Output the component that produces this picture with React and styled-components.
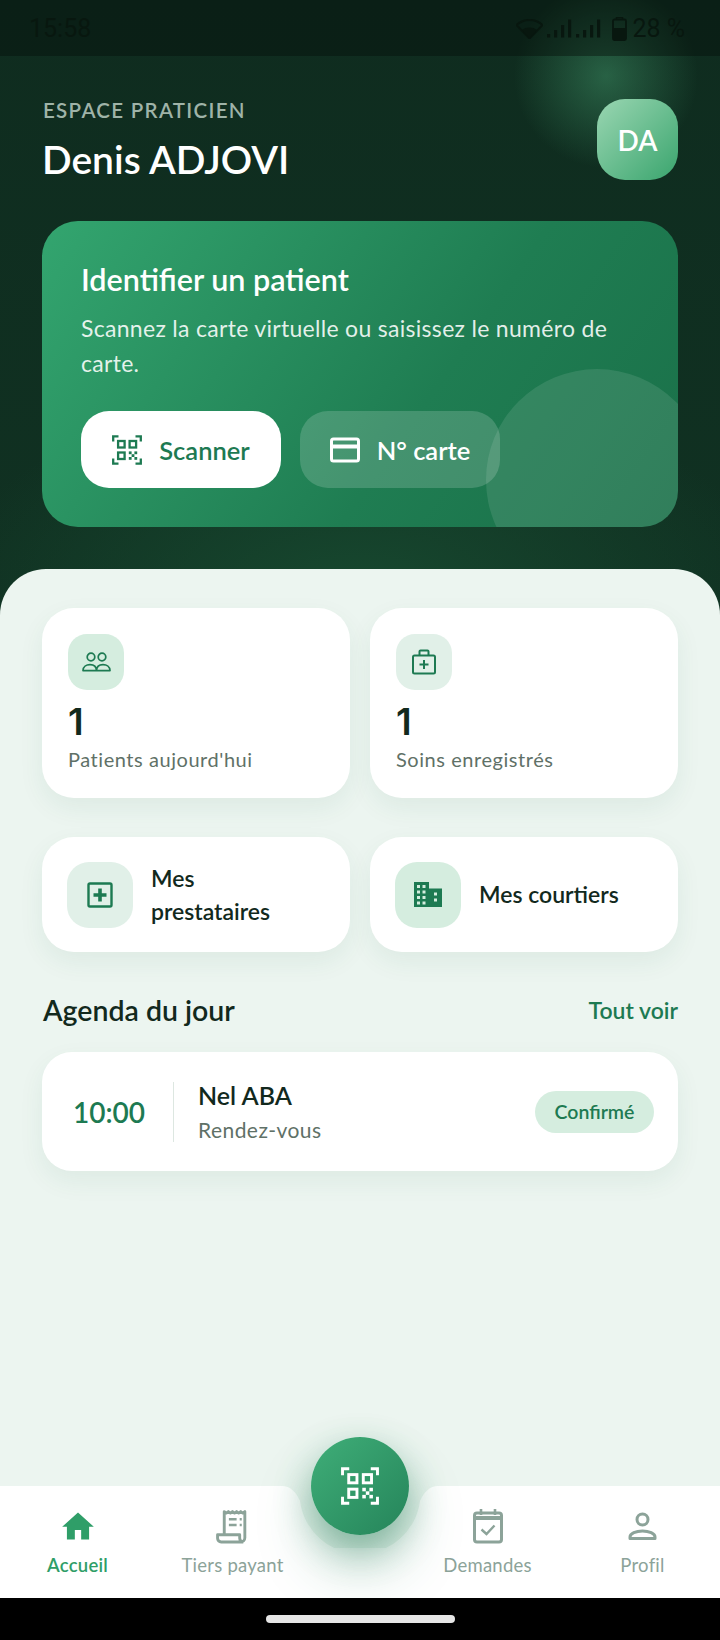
import React from "react";
import styled, { createGlobalStyle } from "styled-components";

const Global = createGlobalStyle`
  html, body { margin: 0; padding: 0; background: #000; }
  * { box-sizing: border-box; }
  body { font-family: "Lato", "Open Sans", sans-serif; }
`;

const Screen = styled.div`
  position: relative;
  width: 720px;
  height: 1640px;
  overflow: hidden;
  display: flex;
  flex-direction: column;
  background:
    radial-gradient(circle 92px at 606px 76px, rgba(74,170,120,.42), rgba(74,170,120,0) 100%),
    radial-gradient(ellipse 420px 200px at 360px 590px, #17482f 0%, rgba(23,72,47,0) 100%),
    linear-gradient(180deg, #0f2c1f 0%, #113524 60%, #113623 100%);
`;

const StatusBar = styled.div`
  height: 56px;
  flex: none;
  display: flex;
  align-items: center;
  justify-content: space-between;
  padding: 1px 35px 0 29px;
  background: rgba(5, 14, 9, .42);
  color: #08170f;
  font: 400 25px "Roboto", sans-serif;
`;

const StatusGroup = styled.div`
  display: flex;
  align-items: center;
`;

const StatusGap = styled.span`
  width: ${p => p.$w}px;
`;

const Header = styled.header`
  flex: none;
  padding: 43px 42px 42px 42px;
  display: flex;
  flex-direction: column;
  gap: 39px;
`;

const HeaderRow = styled.div`
  display: flex;
  justify-content: space-between;
  align-items: flex-start;
`;

const Identity = styled.div`
  display: flex;
  flex-direction: column;
`;

const Eyebrow = styled.div`
  font-size: 20.5px;
  font-weight: 600;
  line-height: 24px;
  letter-spacing: 1.3px;
  color: #9fb3a8;
  margin: -1px 0 0 1px;
`;

const Name = styled.h1`
  margin: 13px 0 -1px 0;
  font-size: 39px;
  font-weight: 600;
  line-height: 48px;
  color: #fff;
`;

const Avatar = styled.div`
  width: 81px;
  height: 81px;
  border-radius: 28px;
  background: linear-gradient(135deg, #9ad6b2 0%, #3aa56e 100%);
  display: flex;
  align-items: center;
  justify-content: center;
  color: #fff;
  font-size: 28px;
  font-weight: 600;
`;

const Hero = styled.section`
  position: relative;
  overflow: hidden;
  height: 306px;
  border-radius: 36px;
  padding: 39px 39px 0;
  background: linear-gradient(125deg, #33a56f 0%, #1f7d52 60%, #1a7049 100%);
`;

const HeroCircle = styled.div`
  position: absolute;
  width: 222px;
  height: 222px;
  right: -30px;
  bottom: -64px;
  border-radius: 50%;
  background: rgba(255, 255, 255, .1);
`;

const HeroTitle = styled.h2`
  margin: 0;
  font-size: 30.5px;
  font-weight: 600;
  line-height: 38px;
  color: #fff;
`;

const HeroText = styled.p`
  margin: 13px 0 0;
  font-size: 23px;
  line-height: 35px;
  letter-spacing: .3px;
  color: rgba(255, 255, 255, .88);
`;

const HeroActions = styled.div`
  position: relative;
  display: flex;
  gap: 19px;
  margin-top: 30px;
`;

const HeroButton = styled.div`
  width: 200px;
  height: 77px;
  border-radius: 28px;
  display: flex;
  align-items: center;
  justify-content: center;
  gap: 17px;
  font-size: 25.5px;
  font-weight: 600;
  background: ${p => (p.$primary ? "#fff" : "rgba(255,255,255,.17)")};
  color: ${p => (p.$primary ? "#1d7a52" : "#fff")};
`;

const Sheet = styled.main`
  flex: 1;
  min-height: 0;
  border-radius: 46px 46px 0 0;
  background: #ecf5f0;
  padding: 39px 42px 0;
`;

const Grid = styled.div`
  display: grid;
  grid-template-columns: 1fr 1fr;
  column-gap: 20px;
  margin-bottom: 39px;
`;

const cardShadow = "0 10px 26px rgba(30, 100, 65, .07)";

const StatCard = styled.div`
  height: 190px;
  border-radius: 32px;
  background: #fff;
  box-shadow: ${cardShadow};
  padding: 26px 26px 0;
`;

const StatIcon = styled.div`
  width: 56px;
  height: 56px;
  border-radius: 19px;
  display: flex;
  align-items: center;
  justify-content: center;
  background: ${p => p.$bg};
`;

const StatValue = styled.div`
  margin-top: 9px;
  font-family: "Inter", sans-serif;
  font-size: 37px;
  font-weight: 600;
  line-height: 46px;
  color: #12291d;
`;

const StatLabel = styled.div`
  margin-top: 1px;
  font-size: 20px;
  line-height: 26px;
  letter-spacing: .55px;
  color: #5f7167;
`;

const LinkCard = styled.div`
  height: 115px;
  border-radius: 32px;
  background: #fff;
  box-shadow: ${cardShadow};
  display: flex;
  align-items: center;
  gap: 18px;
  padding: 0 25px;
`;

const LinkIcon = styled.div`
  width: 66px;
  height: 66px;
  flex: none;
  border-radius: 22px;
  display: flex;
  align-items: center;
  justify-content: center;
  background: ${p => p.$bg};
`;

const LinkLabel = styled.div`
  max-width: 150px;
  font-size: 23px;
  font-weight: 600;
  line-height: 33px;
  color: #12291d;
`;

const SectionHead = styled.div`
  display: flex;
  justify-content: space-between;
  align-items: center;
  height: 40px;
  margin-top: -1px;
  margin-bottom: 22px;
`;

const SectionTitle = styled.h3`
  margin: 0 0 0 1px;
  font-size: 28.5px;
  font-weight: 600;
  color: #12291d;
`;

const SectionLink = styled.span`
  font-size: 23px;
  font-weight: 600;
  color: #1d7a52;
`;

const AgendaCard = styled.div`
  height: 119px;
  border-radius: 30px;
  background: #fff;
  box-shadow: ${cardShadow};
  display: flex;
  align-items: center;
  padding: 0 24px 0 31px;
`;

const AgendaTime = styled.div`
  width: 70px;
  font-size: 28px;
  font-weight: 600;
  white-space: nowrap;
  color: #1d7a52;
`;

const AgendaDivider = styled.div`
  width: 1px;
  height: 60px;
  margin: 0 24px 0 30px;
  background: #dde7e1;
`;

const AgendaBody = styled.div`
  flex: 1;
  display: flex;
  flex-direction: column;
  gap: 7px;
`;

const AgendaName = styled.div`
  font-size: 25px;
  font-weight: 600;
  line-height: 30px;
  color: #12291d;
`;

const AgendaKind = styled.div`
  font-size: 21px;
  line-height: 26px;
  letter-spacing: .45px;
  color: #5f7167;
`;

const Badge = styled.div`
  width: 119px;
  height: 42px;
  border-radius: 21px;
  background: #d5eddf;
  color: #1d7a52;
  display: flex;
  align-items: center;
  justify-content: center;
  font-size: 19.5px;
  font-weight: 600;
`;

const Nav = styled.nav`
  position: relative;
  flex: none;
  height: 112px;
  background: #fff;
  display: grid;
  grid-template-columns: 155px 155px 100px 155px 155px;
`;

const NavItem = styled.div`
  display: flex;
  flex-direction: column;
  align-items: center;
  color: ${p => (p.$active ? "#2f9e68" : "#8ca399")};
  font-size: 18.5px;
  font-weight: ${p => (p.$active ? 600 : 400)};
  letter-spacing: .25px;
  white-space: nowrap;
`;

const NavIconSlot = styled.div`
  height: 38px;
  margin-top: 21px;
  display: flex;
  align-items: center;
  justify-content: center;
`;

const NavLabel = styled.div`
  margin-top: 8px;
  line-height: 24px;
`;

const Notch = styled.svg`
  position: absolute;
  left: 270px;
  top: 0;
  display: block;
`;

const Fab = styled.div`
  position: absolute;
  left: 311px;
  top: -49px;
  width: 98px;
  height: 98px;
  border-radius: 50%;
  background: linear-gradient(135deg, #3fae78 0%, #25845a 100%);
  box-shadow: 0 14px 36px rgba(35, 125, 85, .42), 0 34px 56px rgba(35, 125, 85, .26);
  display: flex;
  align-items: center;
  justify-content: center;
`;

const SystemBar = styled.div`
  position: relative;
  flex: none;
  height: 42px;
  background: #000;
  display: flex;
  justify-content: center;
  padding-top: 17px;
`;

const HomePill = styled.div`
  width: 189px;
  height: 8px;
  border-radius: 4px;
  background: #e6e6e6;
`;

const QrIcon = ({ size, color }) => (
  <svg width={size} height={size} viewBox="0 0 30 30" fill="none">
    <g stroke={color} strokeWidth="2.3">
      <path d="M1.200 6.500V1.400H6.500M23.500 1.400h5.300V6.500M1.200 23.500v5.100H6.500M23.500 28.600h5.300V23.500" />
      <rect x="6.100" y="6" width="6.500" height="6.500" />
      <rect x="17.600" y="6" width="6.500" height="6.500" />
      <rect x="6.100" y="17.500" width="6.500" height="6.500" />
    </g>
    <g fill={color}>
      <rect x="16.800" y="16.400" width="2.800" height="2.800" />
      <rect x="22.400" y="16.400" width="2.800" height="2.800" />
      <rect x="19.600" y="19.200" width="2.800" height="2.800" />
      <rect x="16.800" y="22" width="2.800" height="2.800" />
      <rect x="22.400" y="22" width="2.800" height="2.800" />
    </g>
  </svg>
);

const CardIcon = () => (
  <svg width="30" height="26" viewBox="0 0 30 26" fill="none" stroke="#fff" strokeWidth="3">
    <rect x="1.500" y="2" width="27" height="22" rx="2" />
    <path d="M1.500 9.500h27" strokeWidth="4" />
  </svg>
);

const PeopleIcon = () => (
  <svg width="29" height="20" viewBox="0 0 29 20" fill="none" stroke="#1d7a52" strokeWidth="1.700">
    <circle cx="9" cy="5" r="3.800" />
    <circle cx="20" cy="5" r="3.800" />
    <path d="M1 18.600c0-4 3.400-6 7-6s6.400 1.600 6.500 6H1zM14.500 18.600c.1-4.400 2.900-6 6.500-6s7 2 7 6H14.500z" strokeLinejoin="round" />
  </svg>
);

const BagIcon = () => (
  <svg width="26" height="26" viewBox="0 0 26 26" fill="none" stroke="#1d7a52" strokeWidth="2">
    <rect x="2" y="6.500" width="22" height="18" rx="1.500" />
    <path d="M8.500 6.500V2.500a1 1 0 0 1 1-1h7a1 1 0 0 1 1 1v4" />
    <path d="M13 11v9M8.500 15.500h9" />
  </svg>
);

const PlusBoxIcon = () => (
  <svg width="26" height="26" viewBox="0 0 26 26" fill="none" stroke="#1d7a52">
    <rect x="1.500" y="1.500" width="23" height="23" rx="1.500" strokeWidth="2.400" />
    <path d="M13 6.500v13M6.500 13h13" strokeWidth="3.600" />
  </svg>
);

const BuildingIcon = () => (
  <svg width="30" height="27" viewBox="0 0 30 27">
    <path
      fill="#1d7a52"
      fillRule="evenodd"
      d="M1 1h15v6.500h13V26H1V1zM4 4v3h3V4H4zm5.500 0v3h3V4h-3zM4 9.500v3h3v-3H4zm5.500 0v3h3v-3h-3zM4 15v3h3v-3H4zm5.500 0v3h3v-3h-3zM4 20.500v3h3v-3H4zm5.500 0v3h3v-3h-3zM21 11.500v3h3v-3h-3zm0 6v3h3v-3h-3z"
    />
  </svg>
);

const HomeIcon = () => (
  <svg width="38" height="38" viewBox="0 0 24 24" fill="#2f9e68">
    <path d="M10 20.500v-6h4v6h5v-8h3L12 3.500 2 12.500h3v8z" />
  </svg>
);

const ReceiptIcon = () => (
  <svg width="34" height="35" viewBox="0 0 33 34" fill="none" stroke="#8ca399" strokeWidth="2.800">
    <path d="M8 25V2.500l2 1.500 2-1.500 2 1.500 2-1.500 2 1.500 2-1.500 2 1.500 2-1.500 2 1.500 2-1.500V28a4 4 0 0 1-4 4H5a3.500 3.500 0 0 1-3.500-3.500V25H23v3.500a3.500 3.500 0 0 0 3.500 3.500" strokeLinejoin="round" />
    <path d="M12.500 10h7.500M12.500 15.500h7.500M23 10h2M23 15.500h2" strokeWidth="2.400" />
  </svg>
);

const CalendarIcon = () => (
  <svg width="32" height="36" viewBox="0 0 32 36" fill="none" stroke="#8ca399">
    <rect x="2.500" y="5" width="27" height="29" rx="2.500" strokeWidth="3" />
    <path d="M2.500 10h27" strokeWidth="4" />
    <path d="M9 1v6M23 1v6" strokeWidth="2.600" />
    <path d="M9.500 21.500l5 4.500 8-8.500" strokeWidth="2.400" />
  </svg>
);

const PersonIcon = () => (
  <svg width="29" height="28" viewBox="0 0 29 28" fill="none" stroke="#8ca399" strokeWidth="3">
    <circle cx="14.500" cy="7.500" r="5.500" />
    <path d="M2 26.500v-1.500c0-3.500 6-6 12.500-6S27 21.500 27 25v1.500H2z" strokeLinejoin="round" />
  </svg>
);

const WifiIcon = () => (
  <svg width="27" height="20" viewBox="0 0 27 20">
    <path d="M13.500 19.500L.5 6C8-.8 19-.8 26.500 6L13.500 19.500z" fill="none" stroke="#08170f" strokeWidth="2" />
    <path d="M13.500 19L6 11c4-3.300 11-3.300 15 0l-7.500 8z" fill="#08170f" />
  </svg>
);

const SignalIcon = () => (
  <svg width="26" height="19" viewBox="0 0 26 19" fill="#08170f">
    <rect x="0" y="15" width="3.200" height="3.500" />
    <rect x="7" y="11" width="3.200" height="7.500" />
    <rect x="14" y="6" width="3.200" height="12.500" />
    <rect x="21" y="0.500" width="3.200" height="18" />
  </svg>
);

const BatteryIcon = () => (
  <svg width="15" height="24" viewBox="0 0 15 24" fill="none">
    <path d="M4.500 2V.5h6V2" stroke="#08170f" strokeWidth="1.500" />
    <rect x="1" y="2.500" width="13" height="20.500" rx="1.500" stroke="#08170f" strokeWidth="1.800" />
    <rect x="1" y="11" width="13" height="12" rx="1" fill="#08170f" />
  </svg>
);

export default function App() {
  return (
    <>
      <Global />
      <Screen>
        <StatusBar>
          <span>15:58</span>
          <StatusGroup>
            <WifiIcon />
            <StatusGap $w={4} />
            <SignalIcon />
            <StatusGap $w={3} />
            <SignalIcon />
            <StatusGap $w={10} />
            <BatteryIcon />
            <StatusGap $w={5} />
            <span>28 %</span>
          </StatusGroup>
        </StatusBar>

        <Header>
          <HeaderRow>
            <Identity>
              <Eyebrow>ESPACE PRATICIEN</Eyebrow>
              <Name>Denis ADJOVI</Name>
            </Identity>
            <Avatar>DA</Avatar>
          </HeaderRow>
          <Hero>
            <HeroCircle />
            <HeroTitle>Identifier un patient</HeroTitle>
            <HeroText>Scannez la carte virtuelle ou saisissez le numéro de carte.</HeroText>
            <HeroActions>
              <HeroButton $primary>
                <QrIcon size={30} color="#1d7a52" />
                Scanner
              </HeroButton>
              <HeroButton>
                <CardIcon />
                N° carte
              </HeroButton>
            </HeroActions>
          </Hero>
        </Header>

        <Sheet>
          <Grid>
            <StatCard>
              <StatIcon $bg="#d5eddf"><PeopleIcon /></StatIcon>
              <StatValue>1</StatValue>
              <StatLabel>Patients aujourd'hui</StatLabel>
            </StatCard>
            <StatCard>
              <StatIcon $bg="#e1f0e8"><BagIcon /></StatIcon>
              <StatValue>1</StatValue>
              <StatLabel>Soins enregistrés</StatLabel>
            </StatCard>
          </Grid>
          <Grid>
            <LinkCard>
              <LinkIcon $bg="#e1f0e8"><PlusBoxIcon /></LinkIcon>
              <LinkLabel>Mes prestataires</LinkLabel>
            </LinkCard>
            <LinkCard>
              <LinkIcon $bg="#d5eddf"><BuildingIcon /></LinkIcon>
              <LinkLabel>Mes courtiers</LinkLabel>
            </LinkCard>
          </Grid>
          <SectionHead>
            <SectionTitle>Agenda du jour</SectionTitle>
            <SectionLink>Tout voir</SectionLink>
          </SectionHead>
          <AgendaCard>
            <AgendaTime>10:00</AgendaTime>
            <AgendaDivider />
            <AgendaBody>
              <AgendaName>Nel ABA</AgendaName>
              <AgendaKind>Rendez-vous</AgendaKind>
            </AgendaBody>
            <Badge>Confirmé</Badge>
          </AgendaCard>
        </Sheet>

        <Nav>
          <NavItem $active>
            <NavIconSlot><HomeIcon /></NavIconSlot>
            <NavLabel>Accueil</NavLabel>
          </NavItem>
          <NavItem>
            <NavIconSlot><ReceiptIcon /></NavIconSlot>
            <NavLabel>Tiers payant</NavLabel>
          </NavItem>
          <span />
          <NavItem>
            <NavIconSlot><CalendarIcon /></NavIconSlot>
            <NavLabel>Demandes</NavLabel>
          </NavItem>
          <NavItem>
            <NavIconSlot><PersonIcon /></NavIconSlot>
            <NavLabel>Profil</NavLabel>
          </NavItem>
          <Notch width="180" height="62" viewBox="0 0 180 62">
            <path d="M0 0H180H168C160 0 154 6 150 15A60.500 60.500 0 0 1 30 15C26 6 20 0 12 0H0Z" fill="#ecf5f0" />
          </Notch>
          <Fab><QrIcon size={38} color="#fff" /></Fab>
        </Nav>
        <SystemBar><HomePill /></SystemBar>
      </Screen>
    </>
  );
}
